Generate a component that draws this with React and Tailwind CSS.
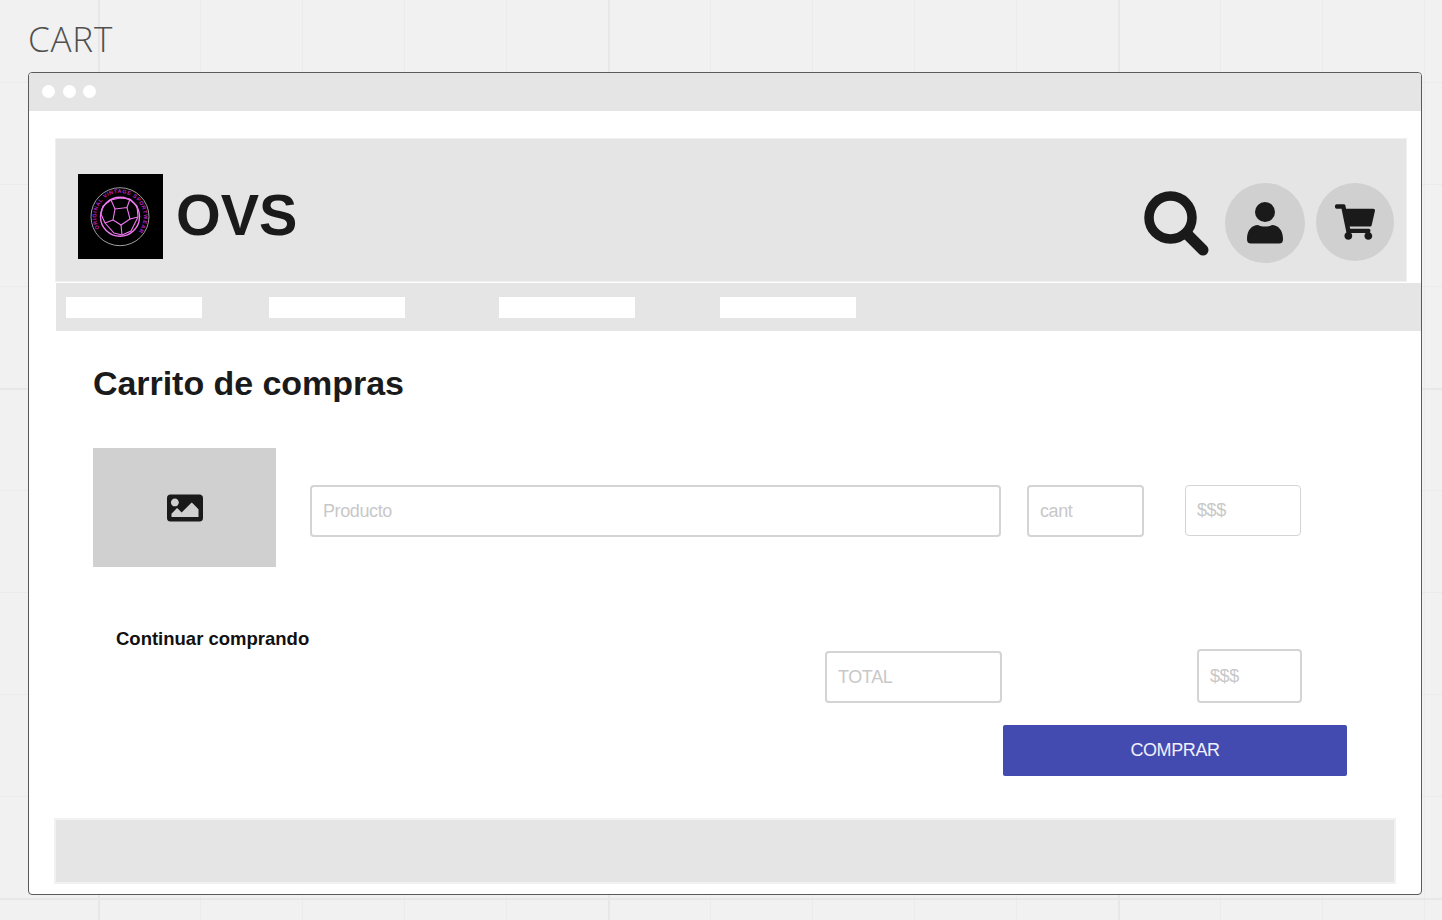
import React from "react";
import { FaImage, FaShoppingCart } from "react-icons/fa";

const navItems = ["mr-[67px]", "mr-[94px]", "mr-[85px]", ""];

const Logo = () => (
    <svg viewBox="0 0 85 85" className="w-[85px] h-[85px] shrink-0 bg-black">
        <defs>
            <path id="ringTop" d="M 21.65 54.45 a 23.5 23.5 0 1 1 40.7 -23.5 a 23.5 23.5 0 1 1 -40.7 23.5" />
        </defs>
        <circle cx="42" cy="42.7" r="29" fill="none" stroke="#b0b0b0" strokeWidth="0.9" />
        <text fill="#c020c0" fontFamily="Liberation Sans, sans-serif" fontSize="5.4" fontWeight="bold" letterSpacing="0.55">
            <textPath href="#ringTop">ORIGINAL VINTAGE SPORTWEAR</textPath>
        </text>
        <circle cx="42" cy="42.7" r="19.5" fill="none" stroke="#ee78f0" strokeWidth="1.400" />
        <g fill="none" stroke="#ee78f0" strokeWidth="1.100">
            <path d="M37 35 L49 33.500 L52 45 L43 51 L35 46 Z" />
            <path d="M37 35 L33 26 M49 33.500 L52 25 M52 45 L60 43 M43 51 L44 61 M35 46 L27 49" />
            <path d="M33 26 L42 24 L52 25 M52 25 L59 32 L60 43 M44 61 L53 57 L60 43 M44 61 L36 59 L27 49 M27 49 L23 40 M33 26 L25 32 L23 40" />
        </g>
    </svg>
);

const SearchIcon = () => (
    <svg viewBox="0 0 66 66" className="w-[66px] h-[66px]">
        <circle cx="26.500" cy="26.500" r="21.500" fill="none" stroke="#1a1a1a" strokeWidth="9.500" />
        <path d="M43 43 L59 59" stroke="#1a1a1a" strokeWidth="11" strokeLinecap="round" />
    </svg>
);

const UserIcon = () => (
    <svg viewBox="0 0 36 42" className="w-[36px] h-[42px]">
        <circle cx="18" cy="10" r="10" fill="#1a1a1a" />
        <path d="M0 37 C0 28 5 23 11 23 C15 25 21 25 25 23 C31 23 36 28 36 37 C36 40 35 41.500 32 41.500 L4 41.500 C1 41.500 0 40 0 37 Z" fill="#1a1a1a" />
    </svg>
);

const Field = ({ label, className }) => (
    <div className={`flex items-center rounded-[4px] border-[#d4d4d4] pl-[11px] text-[18px] tracking-[-0.4px] text-[#c8c8c8] ${className}`}>
        {label}
    </div>
);

const App = () => {
    return (
        <div
            className="w-full h-[920px] overflow-hidden bg-[#f1f1f1] pt-[16px] pl-[28px] font-['Liberation_Sans',sans-serif]"
            style={{
                backgroundImage:
                    "linear-gradient(#e7e7e7 2px, transparent 2px), linear-gradient(90deg, #e7e7e7 2px, transparent 2px), linear-gradient(#ebebeb 1px, transparent 1px), linear-gradient(90deg, #ebebeb 1px, transparent 1px)",
                backgroundSize: "510px 510px, 510px 510px, 102px 102px, 102px 102px",
                backgroundPosition: "0 388px, 98px 0, 0 82px, 98px 0",
            }}
        >
            <h1 className="h-[56px] text-[35px] leading-[46px] tracking-[0.8px] font-['Open_Sans',sans-serif] font-light text-[#505050]">CART</h1>

            <div className="w-[1394px] h-[823px] bg-white rounded-[4px] border border-[#5a5a5a]">
                <div className="h-[38px] pb-[2px] bg-[#e5e5e5] rounded-t-[3px] flex items-center gap-[7.5px] pl-[13px]">
                    <span className="w-[13px] h-[13px] rounded-full bg-white" />
                    <span className="w-[13px] h-[13px] rounded-full bg-white" />
                    <span className="w-[13px] h-[13px] rounded-full bg-white" />
                </div>

                <div className="pl-[26px] pt-[27px]">
                    <header className="w-[1352px] h-[144px] pt-[12px] bg-[#e5e5e5] border border-[#f0f0f0] flex items-center pl-[22px] pr-[12px]">
                        <Logo />
                        <span className="ml-[13px] text-[57.500px] leading-none font-bold text-[#1a1a1a]">OVS</span>
                        <div className="ml-auto flex items-center mt-[11px]">
                            <div className="mr-[15px] mt-[5px]"><SearchIcon /></div>
                            <div className="w-[80px] h-[80px] rounded-full bg-[#d0d0d0] flex items-center justify-center mt-[3px]">
                                <UserIcon />
                            </div>
                            <div className="ml-[11px] w-[78px] h-[78px] rounded-full bg-[#d0d0d0] flex items-center justify-center">
                                <FaShoppingCart className="w-[40px] h-[36px] text-[#1a1a1a]" />
                            </div>
                        </div>
                    </header>

                    <nav className="mt-px ml-px w-[1365px] h-[48px] bg-[#e5e5e5] flex items-center pl-[10px]">
                        {navItems.map((gap, i) => (
                            <div key={i} className={`w-[136px] h-[21px] bg-white ${gap}`} />
                        ))}
                    </nav>
                </div>

                <main className="pl-[64px]">
                    <h2 className="mt-[31px] text-[34px] leading-[42px] tracking-[-0.05px] font-bold text-[#1a1a1a]">Carrito de compras</h2>

                    <div className="mt-[44px] flex items-start">
                        <div className="w-[183px] h-[119px] bg-[#d0d0d0] flex items-center justify-center">
                            <FaImage className="w-[36px] h-[36px] text-[#1a1a1a]" />
                        </div>
                        <Field label="Producto" className="ml-[34px] mt-[37px] w-[691px] h-[52px] border-2" />
                        <Field label="cant" className="ml-[26px] mt-[37px] w-[117px] h-[52px] border-2" />
                        <Field label="$$$" className="ml-[41px] mt-[37px] w-[116px] h-[51px] border-[1.5px]" />
                    </div>

                    <div className="mt-[62px] flex items-start">
                        <p className="ml-[23px] w-[709px] text-[18.500px] leading-[20px] font-bold text-[#111111] shrink-0">Continuar comprando</p>
                        <Field label="TOTAL" className="mt-[22px] w-[177px] h-[52px] border-2" />
                        <Field label="$$$" className="ml-[195px] mt-[20px] w-[105px] h-[54px] border-2" />
                    </div>

                    <button className="block mt-[22px] ml-[910px] w-[344px] h-[51px] rounded-[2px] bg-[#444bb0] text-[18px] tracking-[-0.4px] text-[#f0f0fa]">COMPRAR</button>
                </main>

                <footer className="mt-[42px] ml-[25px] w-[1342px] h-[66px] bg-[#e5e5e5] border-2 border-[#f1f1f1]" />
            </div>
        </div>
    );
};

export default App;
